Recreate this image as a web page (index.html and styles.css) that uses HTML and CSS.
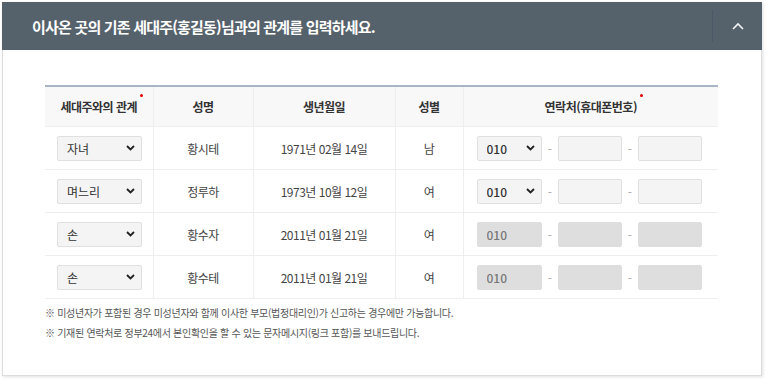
FILE: index.html
```html
<!DOCTYPE html>
<html lang="ko">
<head>
    <meta charset="UTF-8">
    <meta name="viewport" content="width=device-width, initial-scale=1.0">
    <title>세대주와의 관계 입력</title>
    <link rel="stylesheet" href="styles.css">
</head>
<body>
    <div class="panel">
        <div class="panel-head">
            <h2>이사온 곳의 기존 세대주(홍길동)님과의 관계를 입력하세요.</h2>
            <button class="toggle-btn" aria-label="접기">
                <svg width="12" height="8" viewBox="0 0 12 8"><path d="M1 7 L6 2 L11 7" fill="none" stroke="#f2f4f5" stroke-width="1.6"/></svg>
            </button>
        </div>

        <div class="panel-body">
            <table class="family-table">
                <colgroup>
                    <col style="width:108px">
                    <col style="width:100px">
                    <col style="width:142px">
                    <col style="width:68px">
                    <col>
                </colgroup>
                <thead>
                    <tr>
                        <th><span class="req">세대주와의 관계</span></th>
                        <th>성명</th>
                        <th>생년월일</th>
                        <th>성별</th>
                        <th><span class="req">연락처(휴대폰번호)</span></th>
                    </tr>
                </thead>
                <tbody>
                    <tr>
                        <td><select class="rel-select"><option>자녀</option></select></td>
                        <td>황시테</td>
                        <td>1971년 02월 14일</td>
                        <td>남</td>
                        <td>
                            <div class="phone">
                                <select class="phone-select"><option>010</option></select>
                                <span class="dash">-</span>
                                <input type="text" class="phone-input">
                                <span class="dash">-</span>
                                <input type="text" class="phone-input">
                            </div>
                        </td>
                    </tr>
                    <tr>
                        <td><select class="rel-select"><option>며느리</option></select></td>
                        <td>정루하</td>
                        <td>1973년 10월 12일</td>
                        <td>여</td>
                        <td>
                            <div class="phone">
                                <select class="phone-select"><option>010</option></select>
                                <span class="dash">-</span>
                                <input type="text" class="phone-input">
                                <span class="dash">-</span>
                                <input type="text" class="phone-input">
                            </div>
                        </td>
                    </tr>
                    <tr>
                        <td><select class="rel-select"><option>손</option></select></td>
                        <td>황수자</td>
                        <td>2011년 01월 21일</td>
                        <td>여</td>
                        <td>
                            <div class="phone">
                                <select class="phone-select" disabled><option>010</option></select>
                                <span class="dash">-</span>
                                <input type="text" class="phone-input" disabled>
                                <span class="dash">-</span>
                                <input type="text" class="phone-input" disabled>
                            </div>
                        </td>
                    </tr>
                    <tr>
                        <td><select class="rel-select"><option>손</option></select></td>
                        <td>황수테</td>
                        <td>2011년 01월 21일</td>
                        <td>여</td>
                        <td>
                            <div class="phone">
                                <select class="phone-select" disabled><option>010</option></select>
                                <span class="dash">-</span>
                                <input type="text" class="phone-input" disabled>
                                <span class="dash">-</span>
                                <input type="text" class="phone-input" disabled>
                            </div>
                        </td>
                    </tr>
                </tbody>
            </table>

            <ul class="notes">
                <li>※ 미성년자가 포함된 경우 미성년자와 함께 이사한 부모(법정대리인)가 신고하는 경우에만 가능합니다.</li>
                <li>※ 기재된 연락처로 정부24에서 본인확인을 할 수 있는 문자메시지(링크 포함)를 보내드립니다.</li>
            </ul>
        </div>
    </div>
</body>
</html>
```

FILE: styles.css
```css
body {
    font-family: "Noto Sans CJK KR", "Noto Sans", sans-serif;
    background-color: #ffffff;
    margin: 0;
    padding: 2px 4px 6px 2px;
}

.panel {
    background-color: white;
    border: 1px solid #dddddd;
    box-shadow: 1px 1px 3px rgba(0, 0, 0, 0.12);
    height: 374px;
    box-sizing: border-box;
}

.panel-head {
    background-color: #56626b;
    height: 48px;
    display: flex;
    align-items: center;
    margin: -1px -1px 0 -1px;
}

.panel-head h2 {
    flex: 1;
    margin: 0;
    padding-left: 30px;
    color: #ffffff;
    font-size: 15px;
    font-weight: bold;
    letter-spacing: -0.8px;
}

.toggle-btn {
    width: 50px;
    height: 32px;
    background: none;
    border: none;
    border-left: 1px solid #4b5866;
    display: flex;
    align-items: center;
    justify-content: center;
    padding: 0;
}

.panel-body {
    padding: 35px 43px 0 42px;
}

.family-table {
    width: 100%;
    border-collapse: collapse;
    table-layout: fixed;
    border-top: 2px solid #a9b4c6;
    font-size: 12px;
    color: #444444;
}

.family-table th {
    background-color: #f8f8f8;
    height: 39px;
    padding: 0;
    font-weight: bold;
    color: #333333;
    border: 1px solid #eeeeee;
    border-top: none;
    letter-spacing: -0.5px;
}

.family-table td {
    height: 42px;
    padding: 0;
    text-align: center;
    border: 1px solid #eeeeee;
    letter-spacing: -0.5px;
}

.family-table tr > :first-child {
    border-left: none;
}

.family-table tr > :last-child {
    border-right: none;
}

.req {
    position: relative;
}

.req::after {
    content: "";
    position: absolute;
    top: -4px;
    right: -6px;
    width: 3px;
    height: 3px;
    border-radius: 50%;
    background-color: #e60000;
}

select,
input {
    font-family: inherit;
    font-size: 12px;
    color: #333333;
    box-sizing: border-box;
    border: 1px solid #e0e0e0;
    border-radius: 2px;
    background-color: #f4f4f4;
    height: 25px;
    appearance: none;
    -webkit-appearance: none;
    outline: none;
    vertical-align: middle;
}

select {
    padding: 0 0 0 9px;
    background-image: url("data:image/svg+xml;utf8,<svg xmlns='http://www.w3.org/2000/svg' width='9' height='6' viewBox='0 0 9 6'><path d='M1 1 L4.5 4.5 L8 1' fill='none' stroke='%23222' stroke-width='1.8'/></svg>");
    background-repeat: no-repeat;
    background-position: right 6px center;
}

.rel-select {
    width: 85px;
    display: block;
    margin-left: 12px;
}

.phone {
    display: flex;
    align-items: center;
    padding-left: 13px;
}

.phone-select {
    width: 65px;
    font-weight: 500;
}

.phone-input {
    width: 64px;
}

.dash {
    width: 16px;
    text-align: center;
    color: #aaaaaa;
}

select:disabled,
input:disabled {
    background-color: #dedede;
    background-image: none;
    color: #777777;
    border-color: #dedede;
    opacity: 1;
}

.notes {
    list-style: none;
    margin: 4px 0 0 0;
    padding: 0;
    font-size: 10px;
    color: #555555;
    letter-spacing: -0.3px;
}

.notes li {
    line-height: 20px;
}
```
